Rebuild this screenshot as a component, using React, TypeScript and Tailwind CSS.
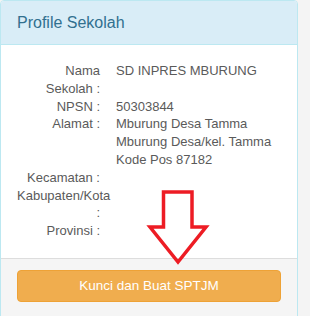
const rows: { label: string; value: string[] }[] = [
  { label: 'Nama Sekolah :', value: ['SD INPRES MBURUNG'] },
  { label: 'NPSN :', value: ['50303844'] },
  { label: 'Alamat :', value: ['Mburung Desa Tamma', 'Mburung Desa/kel. Tamma', 'Kode Pos 87182'] },
  { label: 'Kecamatan :', value: [] },
  { label: 'Kabupaten/Kota :', value: [] },
  { label: 'Provinsi :', value: [] },
];

const Arrow = () => (
  <svg className="absolute left-0 top-0 pointer-events-none" width="310" height="316" viewBox="0 0 310 316">
    <polygon
      points="163.5,192 192,192 192,227 206,227 178,262 150,227 163.5,227"
      fill="none"
      stroke="#ed1c24"
      strokeWidth="3.5"
      strokeLinejoin="miter"
    />
  </svg>
);

export default function App() {
  return (
    <div className="relative w-[310px] h-[316px] overflow-hidden bg-[#f4f4f4] font-['Liberation_Sans',Arial,sans-serif]">
      <div className="w-[298px] h-[330px] border border-[#bce8f1] rounded-t-[4px] bg-white flex flex-col">
        <div className="h-[44px] shrink-0 flex items-center px-[16px] bg-[#d9edf7] border-b border-[#bce8f1] rounded-t-[3px] text-[#31708f] text-[16px]">
          Profile Sekolah
        </div>
        <div className="pt-[17px] pb-[18px] text-[13px] leading-[17.8px] text-[#5a5a5a]">
          {rows.map(r => (
            <div key={r.label} className="flex">
              <div className="w-[83px] ml-[16px] text-right shrink-0">{r.label}</div>
              <div className="ml-[16px]">
                {r.value.map(v => (
                  <div key={v}>{v}</div>
                ))}
              </div>
            </div>
          ))}
        </div>
        <div className="flex-1 bg-[#f5f5f5] border-t border-[#ddd] px-[16px] pt-[11px]">
          <button className="w-full h-[32px] rounded-[4px] bg-[#f0ad4e] border border-[#eea236] text-white text-[13.5px]">
            Kunci dan Buat SPTJM
          </button>
        </div>
      </div>
      <Arrow />
    </div>
  );
}
